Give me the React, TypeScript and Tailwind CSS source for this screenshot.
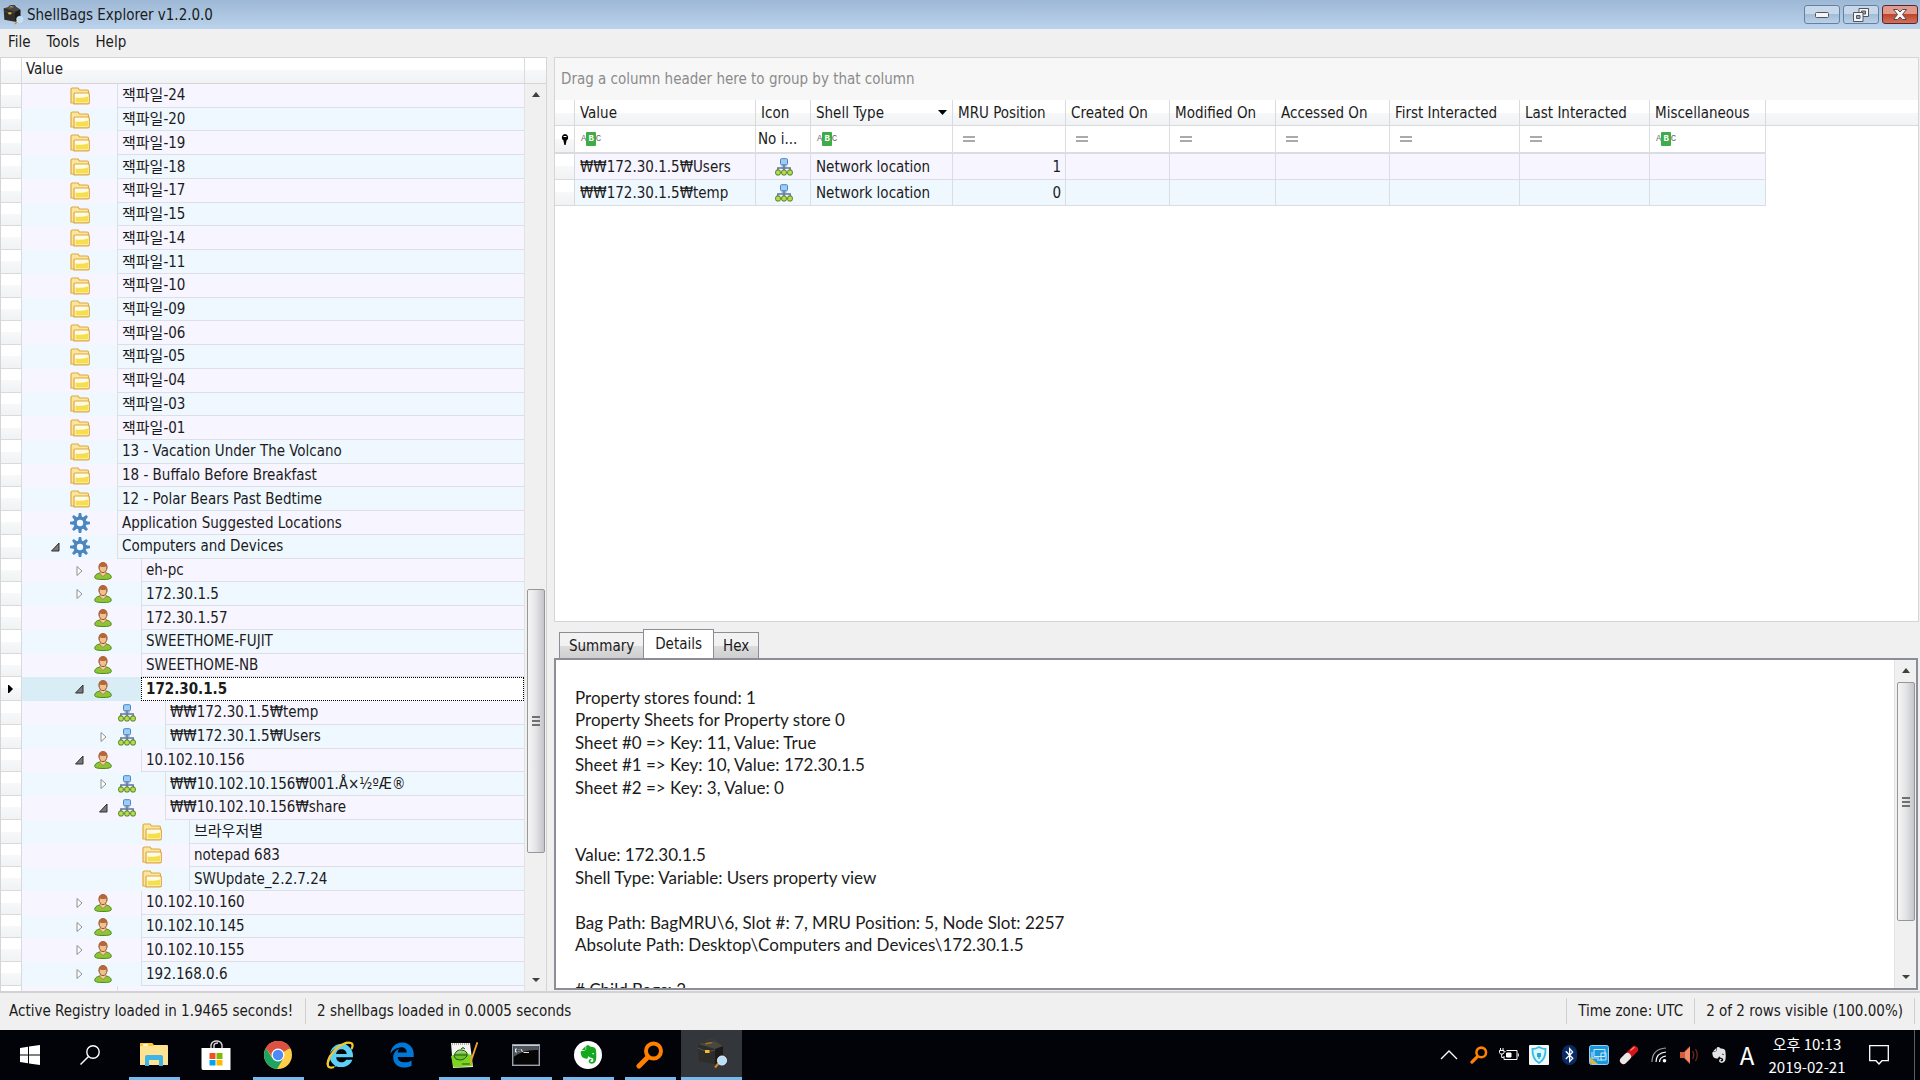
import { useState } from "react";
import clsx from "clsx";
import { FaEdgeLegacy, FaInternetExplorer, FaEvernote, FaBluetoothB } from "react-icons/fa6";

type IconName = "folder" | "gear" | "user" | "network";

interface TreeNode {
  label: string;
  level: 1 | 2 | 3 | 4;
  icon: IconName;
  state?: "open" | "closed";
}

const folder = (label: string): TreeNode => ({ label, level: 1, icon: "folder" });

const nodes: TreeNode[] = [
  ...["24", "20", "19", "18", "17", "15", "14", "11", "10", "09", "06", "05", "04", "03", "01"].map((n) =>
    folder("잭파일-" + n)
  ),
  folder("13 - Vacation Under The Volcano"),
  folder("18 - Buffalo Before Breakfast"),
  folder("12 - Polar Bears Past Bedtime"),
  { label: "Application Suggested Locations", level: 1, icon: "gear" },
  { label: "Computers and Devices", level: 1, icon: "gear", state: "open" },
  { label: "eh-pc", level: 2, icon: "user", state: "closed" },
  { label: "172.30.1.5", level: 2, icon: "user", state: "closed" },
  { label: "172.30.1.57", level: 2, icon: "user" },
  { label: "SWEETHOME-FUJIT", level: 2, icon: "user" },
  { label: "SWEETHOME-NB", level: 2, icon: "user" },
  { label: "172.30.1.5", level: 2, icon: "user", state: "open" },
  { label: "₩₩172.30.1.5₩temp", level: 3, icon: "network" },
  { label: "₩₩172.30.1.5₩Users", level: 3, icon: "network", state: "closed" },
  { label: "10.102.10.156", level: 2, icon: "user", state: "open" },
  { label: "₩₩10.102.10.156₩001.Å×½ºÆ®", level: 3, icon: "network", state: "closed" },
  { label: "₩₩10.102.10.156₩share", level: 3, icon: "network", state: "open" },
  { label: "브라우저별", level: 4, icon: "folder" },
  { label: "notepad 683", level: 4, icon: "folder" },
  { label: "SWUpdate_2.2.7.24", level: 4, icon: "folder" },
  { label: "10.102.10.160", level: 2, icon: "user", state: "closed" },
  { label: "10.102.10.145", level: 2, icon: "user", state: "closed" },
  { label: "10.102.10.155", level: 2, icon: "user", state: "closed" },
  { label: "192.168.0.6", level: 2, icon: "user", state: "closed" },
];

// Space before the expander, by depth
const indents = { 1: "pl-[27px]", 2: "pl-[51px]", 3: "pl-[75px]", 4: "pl-[99px]" };

const columns = [
  { name: "Value", width: "w-[181px]", filter: "abc" },
  { name: "Icon", width: "w-[55px]", filter: "none" },
  { name: "Shell Type", width: "w-[142px]", filter: "abc" },
  { name: "MRU Position", width: "w-[113px]", filter: "eq" },
  { name: "Created On", width: "w-[104px]", filter: "eq" },
  { name: "Modified On", width: "w-[106px]", filter: "eq" },
  { name: "Accessed On", width: "w-[114px]", filter: "eq" },
  { name: "First Interacted", width: "w-[130px]", filter: "eq" },
  { name: "Last Interacted", width: "w-[130px]", filter: "eq" },
  { name: "Miscellaneous", width: "w-[116px]", filter: "abc" },
];

const bags = [
  { value: "₩₩172.30.1.5₩Users", type: "Network location", mru: 1 },
  { value: "₩₩172.30.1.5₩temp", type: "Network location", mru: 0 },
];

const details = `
Property stores found: 1
Property Sheets for Property store 0
Sheet #0 => Key: 11, Value: True
Sheet #1 => Key: 10, Value: 172.30.1.5
Sheet #2 => Key: 3, Value: 0


Value: 172.30.1.5
Shell Type: Variable: Users property view

Bag Path: BagMRU\\6, Slot #: 7, MRU Position: 5, Node Slot: 2257
Absolute Path: Desktop\\Computers and Devices\\172.30.1.5

# Child Bags: 2`;

const headerBg = "bg-linear-to-b from-white from-50% via-[#f7f8f9] via-50% to-[#f1f2f4]";

function NodeIcon({ name }: { name: IconName }) {
  if (name === "folder") {
    return (
      <svg viewBox="0 0 20 18" className="w-5 h-[18px]">
        <path d="M1 16V2.5Q1 1 2.5 1H8l1.5 2H17q1.500 0 1.500 1.500V16Z" fill="#fbe6a0" stroke="#dfa83c" strokeWidth="1.200" />
        <path d="M4 16.800V7q0-1 1-1h13q1.300 0 1.300 1v8.500q0 1.300-1.300 1.300Z" fill="#fffbe6" stroke="#dfa83c" strokeWidth="1.200" />
        <path d="M5.500 10.500q6.500 1 12.500-1V15.500h-12.500Z" fill="#f6df4e" />
      </svg>
    );
  }
  if (name === "gear") {
    return (
      <svg viewBox="0 0 20 20" className="size-5">
        <g fill="#4a86bf">
          {[0, 45, 90, 135].map((a) => (
            <path key={a} d="M8.800 0h2.400l.9 5v10l-.9 5H8.800l-.9-5V5Z" transform={`rotate(${a} 10 10)`} />
          ))}
          <circle cx="10" cy="10" r="6.500" />
        </g>
        <circle cx="10" cy="10" r="3.200" fill="#f4f7ff" />
      </svg>
    );
  }
  if (name === "user") {
    return (
      <svg viewBox="0 0 18 18" className="size-[18px]">
        <path d="M.7 15.500q0-3.500 5-4.500h6.600q5 1 5 4.500 0 2-8.300 2T.7 15.500Z" fill="#8fc436" stroke="#4f8a1c" />
        <path d="M6.500 9h5l.6 2.500L9 14.500l-3.100-3Z" fill="#f3cda0" stroke="#a8693a" strokeWidth=".7" />
        <ellipse cx="9" cy="5.600" rx="3.900" ry="5" fill="#eec092" stroke="#94532a" />
        <path d="M4.700 7Q3.500 .3 9 .3T13.300 7l-1.200-2.500Q9 5.500 6.200 4.500Z" fill="#b4683a" />
      </svg>
    );
  }
  return (
    <svg viewBox="0 0 18 18" className="size-[18px]">
      <path d="M9 7v5M2.800 12v-2h12.400v2" fill="none" stroke="#5b74a0" strokeWidth="1.400" />
      <rect x="5.500" y=".7" width="7" height="6" rx="1" fill="#9ccdf7" stroke="#4b84c4" />
      <path d="M6.500 8h5" stroke="#6a7f9f" />
      {[0.7, 6.7, 12.7].map((x) => (
        <rect key={x} x={x} y="12" width="4.600" height="5" rx="1.500" fill="#b9dc4e" stroke="#4c7a16" />
      ))}
    </svg>
  );
}

function Expander({ state }: { state?: "open" | "closed" }) {
  if (!state) return <span className="w-3 shrink-0" />;
  return (
    <button aria-label={state === "open" ? "Collapse" : "Expand"} className="w-3 shrink-0 flex justify-center">
      <svg viewBox="0 0 12 12" className="size-3">
        {state === "open" ? (
          <path d="M10 2v8H2.500Z" fill="#7a7a7a" stroke="#303030" />
        ) : (
          <path d="M4 1.500v9L9 6Z" fill="#fff" stroke="#8e8e8e" />
        )}
      </svg>
    </button>
  );
}

function TreeRow({ node, odd, selected, onSelect }: { node: TreeNode; odd: boolean; selected: boolean; onSelect: () => void }) {
  return (
    <li role="treeitem" aria-selected={selected} className="flex flex-1 min-h-0">
      <span className={clsx("w-[21px] shrink-0 border-r border-b border-[#d9dadb] flex items-center justify-center", headerBg)}>
        {selected && (
          <svg viewBox="0 0 6 8" className="w-[6px] h-2">
            <path d="M0 0h1l4 4-4 4H0Z" />
          </svg>
        )}
      </span>
      <div className={clsx("flex-1 flex min-w-0", selected ? "bg-[#d9edf7]" : odd ? "bg-[#f0f8ff]" : "bg-[#f7f5ff]")}>
        <span className={clsx("flex items-center shrink-0", indents[node.level])}>
          <Expander state={node.state} />
          <span className="w-[56px] pl-[9px]">
            <NodeIcon name={node.icon} />
          </span>
        </span>
        <button
          onClick={onSelect}
          className={clsx(
            "flex-1 min-w-0 flex items-center text-left px-1 whitespace-pre",
            selected ? "bg-white border border-dotted border-black font-bold" : "border-l border-b border-[#dedfe3]"
          )}
        >
          {node.label}
        </button>
      </div>
    </li>
  );
}

function ScrollBar({ before, thumb, after }: { before: string; thumb: string; after: string }) {
  return (
    <div className="w-[22px] shrink-0 flex flex-col items-center bg-[#f0f0f0] border-l border-[#e3e3e3]">
      <button aria-label="Scroll up" className="h-[22px] shrink-0">
        <svg viewBox="0 0 10 6" className="w-[10px] h-[6px]"><path d="M5 0l4 5H1Z" fill="#404040" /></svg>
      </button>
      <div className={before} />
      <div className={clsx("w-[18px] rounded-xs border border-[#979797] bg-linear-to-r from-[#f5f5f5] via-[#e4e4e7] via-50% to-[#c4c5ca] flex flex-col items-center justify-center gap-[2px]", thumb)}>
        <span className="w-2 h-[2px] bg-[#707070]" />
        <span className="w-2 h-[2px] bg-[#707070]" />
        <span className="w-2 h-[2px] bg-[#707070]" />
      </div>
      <div className={after} />
      <button aria-label="Scroll down" className="h-[22px] shrink-0">
        <svg viewBox="0 0 10 6" className="w-[10px] h-[6px]"><path d="M5 5l4-4H1Z" fill="#404040" /></svg>
      </button>
    </div>
  );
}

function FilterCell({ kind, name }: { kind: string; name: string }) {
  if (kind === "none") return <span className="pl-[2px]">No i...</span>;
  return (
    <div className="flex items-center pl-[6px]">
      {kind === "abc" ? (
        <span className="flex items-center font-['Liberation_Mono',monospace] text-[9px] text-[#6a6a6a]">
          A<span className="bg-[#3fab49] text-white font-bold px-[2px] leading-[14px] rounded-[1px]">B</span>C
        </span>
      ) : (
        <svg viewBox="0 0 14 6" className="w-[14px] h-[6px] ml-[3px]"><path d="M1 1h12M1 5h12" stroke="#8f8f8f" strokeWidth="1.500" /></svg>
      )}
      <input aria-label={`Filter ${name}`} className="flex-1 min-w-0 h-5 bg-transparent outline-none" />
    </div>
  );
}

function BagTable() {
  return (
    <table className="w-full table-fixed border-separate border-spacing-0 text-left">
      <thead>
        <tr className="h-[26px]">
          <th className={clsx("w-5 border-r border-b border-[#d9dadb]", headerBg)} />
          {columns.map((c) => (
            <th key={c.name} className={clsx("font-normal border-r border-b border-[#d9dadb] whitespace-nowrap px-[5px]", c.width, headerBg)}>
              <span className="flex items-center justify-between">
                {c.name}
                {c.name === "Shell Type" && (
                  <svg viewBox="0 0 9 5" className="w-[9px] h-[5px]"><path d="M0 0h9L4.500 5Z" /></svg>
                )}
              </span>
            </th>
          ))}
          <th className={clsx("border-b border-[#d9dadb]", headerBg)} />
        </tr>
        <tr className="h-[28px]">
          <td className={clsx("border-r border-b-2 border-[#d9dadb]", headerBg)}>
            <svg viewBox="0 0 8 11" className="w-2 h-[11px] mx-auto"><path d="M4 0a3.500 3.500 0 0 1 1.500 6.500V7L4.600 11H3.400L2.500 7V6.500A3.500 3.500 0 0 1 4 0Z" /><path d="M2.500 2.500h3" stroke="#fff" /></svg>
          </td>
          {columns.map((c) => (
            <td key={c.name} className="border-r border-b-2 border-[#dcdde1] whitespace-nowrap">
              <FilterCell kind={c.filter} name={c.name} />
            </td>
          ))}
          <td />
        </tr>
      </thead>
      <tbody>
        {bags.map((b, i) => (
          <tr key={b.value} className="h-[26px]">
            <td className={clsx("border-r border-b border-[#d9dadb]", headerBg)} />
            {columns.map((c) => (
              <td
                key={c.name}
                className={clsx(
                  "border-r border-b border-[#dcdde1] pl-[5px] pr-1 truncate",
                  i % 2 ? "bg-[#f0f8ff]" : "bg-[#f7f5ff]",
                  c.name === "MRU Position" && "text-right"
                )}
              >
                {c.name === "Value" && b.value}
                {c.name === "Icon" && <span className="flex justify-center"><NodeIcon name="network" /></span>}
                {c.name === "Shell Type" && b.type}
                {c.name === "MRU Position" && b.mru}
              </td>
            ))}
            <td />
          </tr>
        ))}
      </tbody>
    </table>
  );
}

function Briefcase({ className }: { className: string }) {
  return (
    <svg viewBox="0 0 30 30" className={className}>
      <path d="M9 4.500q-.5-3 2-3.500l5-.5q2 0 2.500 3" fill="none" stroke="#3b3b3b" strokeWidth="1.600" />
      <path d="M1 5l17-3 8 5v13l-8 5L2 22Z" fill="#2e2d2b" />
      <path d="M18 9l8-2v13l-8 5Z" fill="#1c1b1a" />
      <path d="M1 5l17-3 8 5-8 3Z" fill="#4a4743" />
      <path d="M8 4.300l6-1.200 2 1-7 1.300Z" fill="#a0781e" />
      <path d="M1 9q9 5 17 2" stroke="#55524e" fill="none" />
      <rect x="8" y="11" width="4.500" height="3" fill="#f0bd2e" />
      <path d="M22 24l-4 4.500" stroke="#d08a2c" strokeWidth="2" />
      <circle cx="25" cy="21.500" r="4.500" fill="#b9dff8" stroke="#e6f3fc" />
    </svg>
  );
}

function Magnifier({ className }: { className: string }) {
  return (
    <svg viewBox="0 0 28 28" className={className} fill="none" stroke="#ff7f00" strokeLinecap="round">
      <circle cx="17.500" cy="10" r="7.500" strokeWidth="4" />
      <path d="M11.500 16.500L3 25" strokeWidth="5" />
    </svg>
  );
}

const taskbarApps = [
  {
    name: "File Explorer",
    running: true,
    icon: (
      <svg viewBox="0 0 28 24" className="w-7 h-6">
        <path d="M0 1q0-1 1-1h11l2 2h13q1 0 1 1v19H0Z" fill="#ffe393" />
        <path d="M0 1q0-1 1-1h11l2 3H0Z" fill="#ffc533" />
        <path d="M3 1.200h5v1.500H3Z" fill="#fff" />
        <path d="M5 23V14q0-2 2-2h14q2 0 2 2v9h-4v-6H9v6Z" fill="#3db5e6" />
      </svg>
    ),
  },
  {
    name: "Store",
    running: false,
    icon: (
      <svg viewBox="0 0 30 30" className="size-[30px]">
        <path d="M10 8V5q1-4 5.500-4T21 5v3M13 8V5q.5-2 4-2" fill="none" stroke="#d9d9d9" strokeWidth="1.400" />
        <path d="M.5 8h29v22H2q-1.500 0-1.500-2Z" fill="#fff" />
        <path d="M8.500 13h6v6h-6Z" fill="#f25022" /><path d="M15.500 13h6v6h-6Z" fill="#7fba00" />
        <path d="M8.500 20h6v5.500h-6Z" fill="#00a4ef" /><path d="M15.500 20h6v5.500h-6Z" fill="#ffb900" />
      </svg>
    ),
  },
  {
    name: "Chrome",
    running: true,
    icon: (
      <svg viewBox="0 0 28 28" className="size-7">
        <circle cx="14" cy="14" r="14" fill="#ffcd46" />
        <path d="M14 14L1.900 7a14 14 0 0 1 24.200 0Z" fill="#dd5144" />
        <path d="M14 14l-5.600 3.200L1.900 7A14 14 0 0 0 13 28l6-10Z" fill="#1da462" />
        <path d="M14 7.500h12.500A14 14 0 0 0 1.900 7l6.500 9Z" fill="#dd5144" />
        <circle cx="14" cy="14" r="6.500" fill="#fff" />
        <circle cx="14" cy="14" r="5.200" fill="#4c8bf5" />
      </svg>
    ),
  },
  {
    name: "Internet Explorer",
    running: false,
    icon: (
      <span className="relative">
        <FaInternetExplorer className="size-[26px] text-[#5fd0f5]" />
        <svg viewBox="0 0 28 28" className="absolute -left-px -top-px size-7">
          <path d="M8 26Q2 28 1.500 23 2 15 11 7q9-7 14-5 3 1 .5 6" fill="none" stroke="#f9c623" strokeWidth="2.200" />
        </svg>
      </span>
    ),
  },
  { name: "Edge", running: false, icon: <FaEdgeLegacy className="size-[26px] text-[#0078d7]" /> },
  {
    name: "Notepad++",
    running: true,
    icon: (
      <svg viewBox="0 0 28 28" className="size-7">
        <path d="M1 2h19l3 24-20 1Z" fill="#f4f4ee" />
        <path d="M1 15q10-6 20-1l1.500 11-19 1.500Z" fill="#7ed321" />
        <path d="M2 3h18" stroke="#999" strokeWidth="1.500" strokeDasharray="1 1" />
        <path d="M4 15q2-7 8-6t5 6q-4 6-11 3ZM5 14h12M11 8q2-3 4 0M12 23h8" fill="#5dbb2a" fillOpacity=".6" stroke="#24511b" />
        <path d="M20 20L26.500 1l1.700.7-6.500 19-2 3Z" fill="#eea52a" />
      </svg>
    ),
  },
  {
    name: "Command Prompt",
    running: true,
    icon: (
      <svg viewBox="0 0 28 22" className="w-7 h-[22px]">
        <rect x=".7" y=".7" width="26.600" height="20.600" fill="#050505" stroke="#9aa3ab" strokeWidth="1.400" />
        <path d="M1.500 2h25v4Q12 5 1.500 13Z" fill="#50555a" />
        <path d="M1 1.500h26" stroke="#c5ccd2" />
        <path d="M5 5H3.500v3H5M7 5.500v.5M7 7.500v.5M9 5l1.500 3M11.500 8.500H17" stroke="#fff" fill="none" strokeWidth=".9" />
      </svg>
    ),
  },
  {
    name: "Evernote",
    running: true,
    icon: (
      <span className="size-7 rounded-full bg-white flex items-center justify-center">
        <FaEvernote className="size-[21px] text-[#14a81f]" />
      </span>
    ),
  },
  { name: "Everything", running: true, icon: <Magnifier className="size-7" /> },
];

const trayIcons = [
  { name: "Show hidden icons", icon: <svg viewBox="0 0 18 10" className="w-[18px] h-[10px]"><path d="M1 9l8-8 8 8" fill="none" stroke="#fff" strokeWidth="1.300" /></svg> },
  { name: "Everything", icon: <Magnifier className="size-[18px]" /> },
  {
    name: "Battery",
    icon: (
      <svg viewBox="0 0 20 14" className="w-5 h-[14px]" fill="none" stroke="#fff">
        <path d="M6.500 3.500H5.500M7.500 2.500h10.500v9h-13V8M19.300 5.500v3M1.500 0v2.500M4 0v2.500M.5 2.500h4.500v2l-1 1.500h-2.500l-1-1.500ZM2.700 6v3.500h2" />
        <path d="M7.500 5H12v4H7.500Z" fill="#fff" />
      </svg>
    ),
  },
  {
    name: "Security",
    icon: (
      <svg viewBox="0 0 20 20" className="size-5">
        <rect width="20" height="20" rx="1" fill="#f6f8f8" />
        <path d="M10 2q3 2 6.500 2 .5 10-6.500 14Q3 14 3.500 4 7 4 10 2Z" fill="#dff5fc" stroke="#35bfe8" strokeWidth="1.800" />
        <path d="M8 8h4v4H8ZM9.300 12h1.400v2H9.300Z" fill="#28a9d4" />
      </svg>
    ),
  },
  { name: "Bluetooth", icon: <span className="w-[15px] h-5 rounded-[8px] bg-[#092a66] text-white flex items-center justify-center"><FaBluetoothB className="size-4" /></span> },
  {
    name: "Intel Graphics",
    icon: (
      <svg viewBox="0 0 20 20" className="size-5">
        <rect x=".5" y=".5" width="19" height="19" rx="2" fill="#1d96db" stroke="#8ed2f5" />
        <path d="M1 12v5q0 2 2 2h6Z" fill="#d8b54a" />
        <path d="M5 4.500h11v7H5ZM3 7v6h7M8 15h5M12 8h5v7h-5Z" fill="none" stroke="#c8ecff" />
      </svg>
    ),
  },
  {
    name: "Pill",
    icon: (
      <svg viewBox="0 0 20 20" className="size-5" strokeLinecap="round" strokeWidth="7">
        <path d="M4.500 15.500L15.500 4.500" stroke="#d4161a" />
        <path d="M4.500 15.500L8.500 11.500" stroke="#e9e9e6" />
        <path d="M12 5l3-2.500" stroke="#ff7d78" strokeWidth="1.500" />
      </svg>
    ),
  },
  {
    name: "Wi-Fi",
    icon: (
      <svg viewBox="0 0 16 16" className="size-4" fill="none" stroke="#fff" strokeWidth="1.200">
        <path d="M1 15Q1 2 15 1" stroke="#9a9a9a" />
        <path d="M5 15Q5 6 15 5M8.500 15q0-5 6.500-6" /><circle cx="13.500" cy="13.800" r="1.200" fill="#fff" />
      </svg>
    ),
  },
  {
    name: "Volume",
    icon: (
      <svg viewBox="0 0 20 20" className="size-5">
        <path d="M1 7h4l6-6v18l-6-6H1Z" fill="#d7593a" />
        <path d="M6 7l5-5v16l-5-5Z" fill="#ef8d6c" />
        <path d="M13.500 6q2.500 4 0 8M16.500 4q3.500 6 0 12" fill="none" stroke="#6e2a1a" strokeWidth="1.300" />
      </svg>
    ),
  },
  { name: "Evernote", icon: <FaEvernote className="size-[18px] text-[#e4e4e4]" /> },
];

export default function App() {
  const [selected, setSelected] = useState(25);
  const [tab, setTab] = useState("Details");

  return (
    <div className="h-screen flex flex-col bg-[#f0f0f0] text-[#1b1b1b] text-[15px] leading-5 font-['DejaVu_Sans_Condensed','Noto_Sans','Noto_Sans_CJK_KR',sans-serif] overflow-hidden">
      <header className="h-[29px] shrink-0 flex items-center bg-linear-to-b from-[#9db8d5] to-[#bbd3ec] px-[2px]">
        <Briefcase className="w-[22px] h-5" />
        <h1 className="pl-[3px] flex-1">ShellBags Explorer v1.2.0.0</h1>
        <div className="flex gap-[3px]">
          <button aria-label="Minimize" className="w-9 h-[19px] rounded-[3px] border border-[#66809f] bg-linear-to-b from-[#c6d8ea] from-50% via-[#a2bdd9] via-50% to-[#b9d1e8] flex items-center justify-center">
            <svg viewBox="0 0 14 6" className="w-[14px] h-[6px]"><rect x=".5" y=".5" width="13" height="5" rx="1" fill="#f5f5f5" stroke="#54545f" /></svg>
          </button>
          <button aria-label="Restore" className="w-9 h-[19px] rounded-[3px] border border-[#66809f] bg-linear-to-b from-[#c6d8ea] from-50% via-[#a2bdd9] via-50% to-[#b9d1e8] flex items-center justify-center">
            <svg viewBox="0 0 16 14" className="w-4 h-[14px]" fill="#f5f5f5" stroke="#54545f">
              <path d="M6 .5h9.500v8H6Z" /><path d="M8.500 3h4v3h-4Z" fill="#8ba5c3" />
              <path d="M.5 4.500H10v9H.5Z" /><path d="M3.500 7.500h3.500v3H3.500Z" fill="#8ba5c3" />
            </svg>
          </button>
          <button aria-label="Close" className="w-9 h-[19px] rounded-[3px] border border-[#5c2430] bg-linear-to-b from-[#e09a8c] from-50% via-[#bd4529] via-50% to-[#d4705a] flex items-center justify-center">
            <svg viewBox="0 0 14 11" className="w-[14px] h-[11px]"><path d="M.5.500h4L7 3 9.500.5h4L9.500 5.500l4 5h-4L7 8l-2.500 2.500h-4l4-5Z" fill="#f5f5f5" stroke="#544a52" /></svg>
          </button>
        </div>
      </header>

      <nav className="h-7 shrink-0 flex items-center gap-4 pl-2 pb-[2px]">
        <button>File</button>
        <button>Tools</button>
        <button>Help</button>
      </nav>

      <main className="flex-1 min-h-0 flex gap-[7px] border-b-2 border-[#d2d2d2]">
        <section className="w-[547px] shrink-0 flex flex-col border border-b-0 border-[#d5d5d5]">
          <div className="h-[26px] shrink-0 flex border-b border-[#d5d6d8]">
            <span className={clsx("w-[21px] border-r border-[#d9dadb]", headerBg)} />
            <span className={clsx("flex-1 pl-1 pt-px border-r border-[#d9dadb]", headerBg)}>Value</span>
            <span className={clsx("w-[21px]", headerBg)} />
          </div>
          <div className="flex-1 min-h-0 flex">
            <ul role="tree" aria-label="Shellbags" className="flex-1 min-w-0 flex flex-col">
              {nodes.map((n, i) => (
                <TreeRow key={i} node={n} odd={i % 2 === 1} selected={i === selected} onSelect={() => setSelected(i)} />
              ))}
              <li className="h-[5px] shrink-0 flex bg-[#f7f5ff]">
                <span className="w-[21px] bg-white border-r border-[#d9dadb]" />
                <span className="ml-[95px] flex-1 border-l border-[#dedfe3]" />
              </li>
            </ul>
            <ScrollBar before="flex-[484]" thumb="flex-[262]" after="flex-[116]" />
          </div>
        </section>

        <section className="flex-1 min-w-0 flex flex-col">
          <div className="flex-1 min-h-0 flex flex-col border border-[#d5d5d5] bg-white mr-px">
            <div className="h-[42px] shrink-0 flex items-center bg-[#f7f7f7] pl-[6px] text-[#8b8b8b]">
              Drag a column header here to group by that column
            </div>
            <BagTable />
          </div>

          <div role="tablist" className="h-9 shrink-0 flex items-end pl-[5px]">
            {["Summary", "Details", "Hex"].map((t) => (
              <button
                key={t}
                role="tab"
                aria-selected={t === tab}
                onClick={() => setTab(t)}
                className={clsx(
                  "border border-b-0 border-[#8b8e96]",
                  t === tab ? "h-[29px] px-[11px] bg-white" : "h-[26px] px-[9px] bg-linear-to-b from-[#f2f2f2] from-50% via-[#dddddd] via-50% to-[#cfcfcf]",
                  t === "Summary" && "border-r-0",
                  t === "Hex" && "border-l-0"
                )}
              >
                {t}
              </button>
            ))}
          </div>

          <div className="h-[332px] shrink-0 flex border-2 border-[#8b8e99] mr-[2px] mb-px bg-white">
            <textarea
              aria-label="Details"
              readOnly
              value={details}
              className="flex-1 min-w-0 resize-none outline-none overflow-hidden pl-[19px] pt-1 text-[17px] leading-[1.325] font-['Lato','Noto_Sans',sans-serif] text-[#1b1b1b]"
            />
            <ScrollBar before="h-0" thumb="flex-[239]" after="flex-[45]" />
          </div>
        </section>
      </main>

      <footer className="h-[37px] shrink-0 flex items-center px-[5px] pb-[2px]">
        <span className="pl-1 pr-3">Active Registry loaded in 1.9465 seconds!</span>
        <span className="h-[26px] w-px bg-[#cfcfcf]" />
        <span className="pl-[11px] flex-1">2 shellbags loaded in 0.0005 seconds</span>
        <span className="h-[26px] w-px bg-[#cfcfcf]" />
        <span className="px-[11px]">Time zone: UTC</span>
        <span className="h-[26px] w-px bg-[#cfcfcf]" />
        <span className="px-[11px]">2 of 2 rows visible (100.00%)</span>
        <span className="h-[26px] w-px bg-[#cfcfcf]" />
      </footer>

      <div className="h-[50px] shrink-0 flex bg-[#010308] text-white font-['Noto_Sans_CJK_KR',sans-serif]">
        <button aria-label="Start" className="w-[60px] flex items-center justify-center">
          <svg viewBox="0 0 20 20" className="size-5" fill="#fff">
            <path d="M0 3l8-1.200v7.700H0ZM9 1.600L20 0v9.500H9ZM0 10.500h8v7.700L0 17ZM9 10.500h11V20L9 18.400Z" />
          </svg>
        </button>
        <button aria-label="Search" className="w-[63px] flex items-center justify-center pr-[3px]">
          <svg viewBox="0 0 20 20" className="size-5" fill="none" stroke="#fff" strokeWidth="1.400">
            <circle cx="13" cy="7" r="6.200" /><path d="M8.500 11.500L.5 19.500" />
          </svg>
        </button>
        {taskbarApps.map((app) => (
          <button key={app.name} aria-label={app.name} className="w-[62px] flex flex-col items-center">
            <span className="flex-1 flex items-center justify-center pt-[2px]">{app.icon}</span>
            <span className={clsx("w-[51px] h-[3px]", app.running && "bg-[#76b9ed]")} />
          </button>
        ))}
        <button aria-label="ShellBags Explorer" className="w-[61px] flex flex-col items-center bg-[#33363a]">
          <span className="flex-1 flex items-center"><Briefcase className="size-[30px]" /></span>
          <span className="w-full h-[3px] bg-[#76b9ed]" />
        </button>

        <div className="ml-auto flex items-center">
          {trayIcons.map((t) => (
            <button key={t.name} aria-label={t.name} className="w-[30px] flex items-center justify-center">
              {t.icon}
            </button>
          ))}
          <button aria-label="Input language" className="w-[26px] text-[24px]">A</button>
          <button className="w-[94px] text-[15px] leading-[23px] text-center">
            <span className="block">오후 10:13</span>
            <span className="block">2019-02-21</span>
          </button>
          <button aria-label="Notifications" className="w-[50px] flex justify-center">
            <svg viewBox="0 0 20 20" className="size-5" fill="none" stroke="#fff" strokeWidth="1.300">
              <path d="M.7.700h18.600v15H13L10 19l-3-3.300H.7Z" />
            </svg>
          </button>
          <span className="ml-[10px] mr-[5px] w-px h-[50px] bg-[#5a5c60]" />
        </div>
      </div>
    </div>
  );
}
